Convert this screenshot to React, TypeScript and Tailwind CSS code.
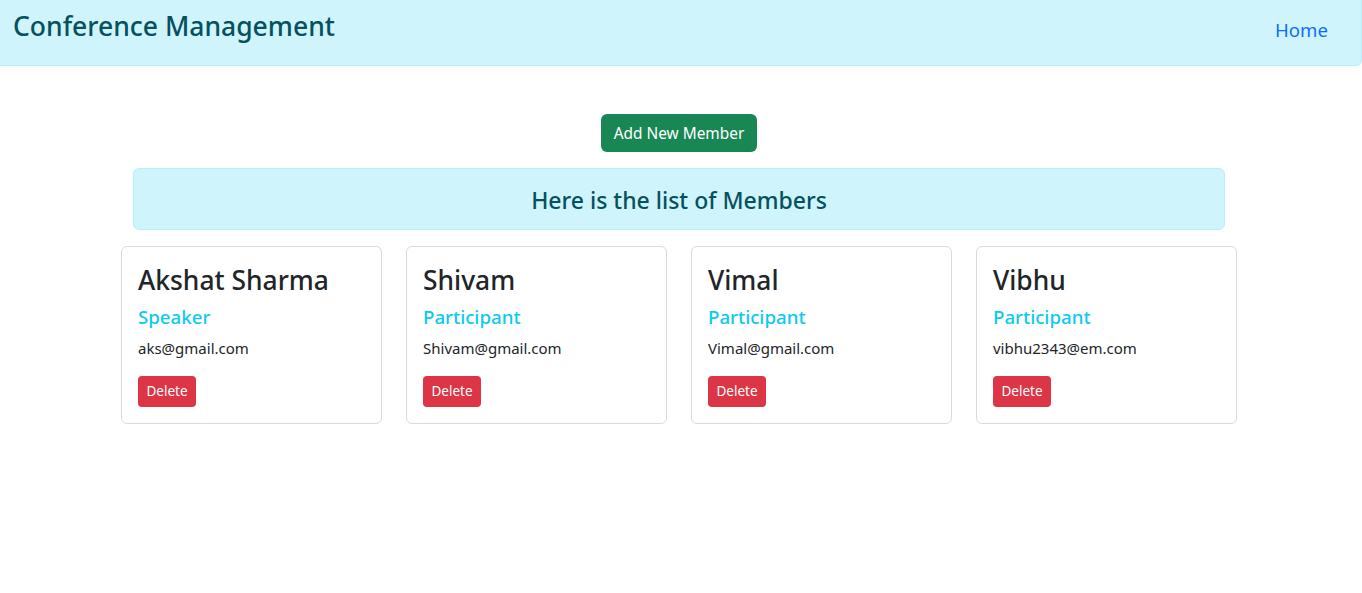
const members = [
  { name: 'Akshat Sharma', role: 'Speaker', email: 'aks@gmail.com' },
  { name: 'Shivam', role: 'Participant', email: 'Shivam@gmail.com' },
  { name: 'Vimal', role: 'Participant', email: 'Vimal@gmail.com' },
  { name: 'Vibhu', role: 'Participant', email: 'vibhu2343@em.com' },
];

function MemberCard({ name, role, email }: { name: string; role: string; email: string }) {
  return (
    <div className="w-[261px] h-[178px] border border-[#dadada] rounded-[6px] bg-white p-4">
      <h3 className="text-[26.4px] leading-[34px] font-medium text-[#212529] mb-2">{name}</h3>
      <h5 className="text-[18.7px] leading-[24px] font-medium text-[#0dcaf0] mb-2">{role}</h5>
      <p className="text-[15px] leading-[23px] text-[#212529] mb-4">{email}</p>
      <button className="w-[58px] h-[31px] rounded-[4px] bg-[#dc3545] text-white text-[13.5px]">Delete</button>
    </div>
  );
}

export default function App() {
  return (
    <div className="min-h-[593px] bg-white font-['Noto_Sans',sans-serif] text-[#212529]">
      {/* Top bar */}
      <nav className="h-[66px] bg-[#cff4fc] border-b border-r border-[#b6effb] rounded-br-[6px] flex items-start justify-between pl-[13px] pr-[33px]">
        <h2 className="text-[26.5px] leading-[32px] font-medium text-[#055160] mt-[10px]">Conference Management</h2>
        <a href="#" className="text-[18.6px] leading-[28px] text-[#0d6efd] mt-[16px]">Home</a>
      </nav>

      <div className="w-[1116px] ml-[121px] flex flex-col items-center">
        <button className="mt-[48px] w-[156px] h-[38px] rounded-[6px] bg-[#198754] text-white text-[15.4px] pt-[1px]">Add New Member</button>

        <div className="mt-4 w-[1092px] h-[62px] bg-[#cff4fc] border border-[#b6effb] rounded-[6px] flex items-center justify-center pt-[2px]">
          <h3 className="text-[23px] leading-[34px] font-medium text-[#055160]">Here is the list of Members</h3>
        </div>

        <div className="mt-4 w-full flex justify-between">
          {members.map((m) => (
            <MemberCard key={m.name} {...m} />
          ))}
        </div>
      </div>
    </div>
  );
}
